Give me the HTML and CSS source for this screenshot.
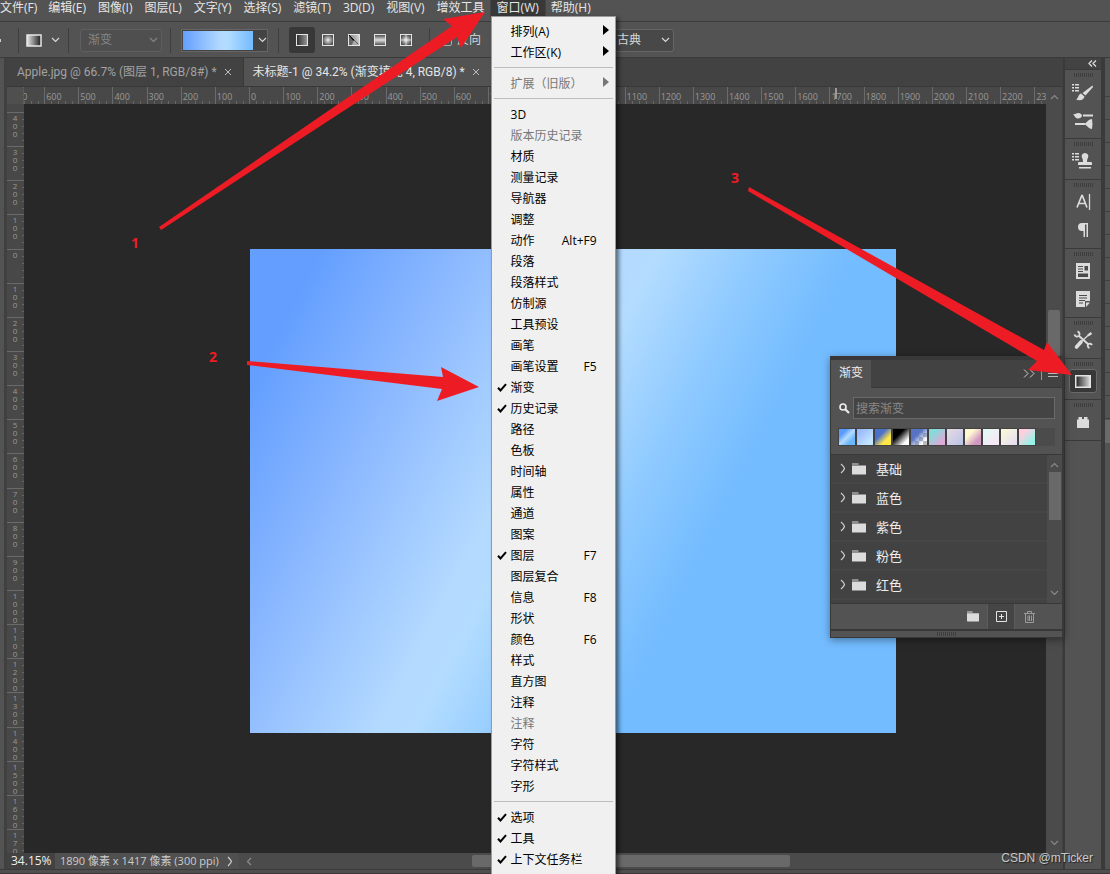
FILE: index.html
```html
<!DOCTYPE html>
<html lang="zh-CN">
<head>
<meta charset="utf-8">
<title>未标题-1</title>
<link rel="stylesheet" href="styles.css">
</head>
<body>
<svg class="defs" width="0" height="0" aria-hidden="true">
  <defs>
    <linearGradient id="g-dark"><stop offset="0" stop-color="#222"/><stop offset="1" stop-color="#ddd"/></linearGradient>
    <linearGradient id="g-fg"><stop offset="0" stop-color="#e8e8e8"/><stop offset="1" stop-color="#1c1c1c"/></linearGradient>
    <linearGradient id="g-lin"><stop offset="0" stop-color="#2c2c2c"/><stop offset="1" stop-color="#9a9a9a"/></linearGradient>
    <radialGradient id="g-rad"><stop offset="0" stop-color="#eee"/><stop offset="1" stop-color="#555"/></radialGradient>
    <linearGradient id="g-ang" x1="0" y1="0.3" x2="1" y2="0"><stop offset="0" stop-color="#777"/><stop offset="1" stop-color="#ddd"/></linearGradient>
    <linearGradient id="g-ref" x1="0" y1="0" x2="0" y2="1"><stop offset="0" stop-color="#444"/><stop offset=".5" stop-color="#ddd"/><stop offset="1" stop-color="#444"/></linearGradient>
    <symbol id="chev" viewBox="0 0 9 6"><path d="M1 1l3.500 3.500L8 1" fill="none" stroke="currentColor" stroke-width="1.200"/></symbol>
    <symbol id="check" viewBox="0 0 10 9"><path d="M1 4.800l2.500 2.700L9 1.200" fill="none" stroke="#000" stroke-width="2"/></symbol>
    <symbol id="folder" viewBox="0 0 14 12"><path d="M0 .500h6.500v1H0zM0 2.500h14V11q0 .500-.500.500h-13Q0 11.500 0 11z" fill="#dcdcdc"/></symbol>
    <symbol id="close" viewBox="0 0 8 8"><path d="M1 1l6 6M7 1L1 7" stroke="#bdbdbd" stroke-width="1"/></symbol>
  </defs>
</svg>

<div class="app">
  <nav class="menubar" aria-label="主菜单">
    <button>文件(F)</button><button>编辑(E)</button><button>图像(I)</button><button>图层(L)</button><button>文字(Y)</button><button>选择(S)</button><button>滤镜(T)</button><button>3D(D)</button><button>视图(V)</button><button>增效工具</button>
    <div class="menu-host">
      <button class="open">窗口(W)</button>
      <ul class="menu">
        <li><button><i></i><span>排列(A)</span><b class="sub"></b></button></li>
        <li><button><i></i><span>工作区(K)</span><b class="sub"></b></button></li>
        <li class="rule"></li>
        <li><button disabled><i></i><span>扩展（旧版）</span><b class="sub"></b></button></li>
        <li class="rule"></li>
        <li><button><i></i><span>3D</span></button></li>
        <li><button disabled><i></i><span>版本历史记录</span></button></li>
        <li><button><i></i><span>材质</span></button></li>
        <li><button><i></i><span>测量记录</span></button></li>
        <li><button><i></i><span>导航器</span></button></li>
        <li><button><i></i><span>调整</span></button></li>
        <li><button><i></i><span>动作</span><kbd>Alt+F9</kbd></button></li>
        <li><button><i></i><span>段落</span></button></li>
        <li><button><i></i><span>段落样式</span></button></li>
        <li><button><i></i><span>仿制源</span></button></li>
        <li><button><i></i><span>工具预设</span></button></li>
        <li><button><i></i><span>画笔</span></button></li>
        <li><button><i></i><span>画笔设置</span><kbd>F5</kbd></button></li>
        <li><button><svg><use href="#check"/></svg><span>渐变</span></button></li>
        <li><button><svg><use href="#check"/></svg><span>历史记录</span></button></li>
        <li><button><i></i><span>路径</span></button></li>
        <li><button><i></i><span>色板</span></button></li>
        <li><button><i></i><span>时间轴</span></button></li>
        <li><button><i></i><span>属性</span></button></li>
        <li><button><i></i><span>通道</span></button></li>
        <li><button><i></i><span>图案</span></button></li>
        <li><button><svg><use href="#check"/></svg><span>图层</span><kbd>F7</kbd></button></li>
        <li><button><i></i><span>图层复合</span></button></li>
        <li><button><i></i><span>信息</span><kbd>F8</kbd></button></li>
        <li><button><i></i><span>形状</span></button></li>
        <li><button><i></i><span>颜色</span><kbd>F6</kbd></button></li>
        <li><button><i></i><span>样式</span></button></li>
        <li><button><i></i><span>直方图</span></button></li>
        <li><button><i></i><span>注释</span></button></li>
        <li><button disabled><i></i><span>注释</span></button></li>
        <li><button><i></i><span>字符</span></button></li>
        <li><button><i></i><span>字符样式</span></button></li>
        <li><button><i></i><span>字形</span></button></li>
        <li class="rule"></li>
        <li><button><svg><use href="#check"/></svg><span>选项</span></button></li>
        <li><button><svg><use href="#check"/></svg><span>工具</span></button></li>
        <li><button><svg><use href="#check"/></svg><span>上下文任务栏</span></button></li>
      </ul>
    </div>
    <button>帮助(H)</button>
  </nav>

  <div class="options">
    <span class="nub"></span>
    <span class="divider first"></span>
    <button class="tool" aria-label="渐变工具">
      <svg width="16" height="13"><rect x="1" y="1" width="14" height="11" fill="url(#g-fg)" stroke="#e8e8e8" stroke-width="1.500"/></svg>
      <svg width="9" height="6"><use href="#chev"/></svg>
    </button>
    <span class="divider"></span>
    <span class="picker faded"><select aria-label="填充类型" disabled><option>渐变</option></select><svg width="9" height="6"><use href="#chev"/></svg></span>
    <span class="divider"></span>
    <button class="ramp" aria-label="编辑渐变"><span class="ramp-fill"></span><svg width="9" height="6"><use href="#chev"/></svg></button>
    <span class="divider"></span>
    <div class="styles">
      <button class="on" aria-label="线性渐变"><svg width="12" height="12"><rect x=".5" y=".5" width="11" height="11" fill="url(#g-lin)" stroke="#e4e4e4"/></svg></button>
      <button aria-label="径向渐变"><svg width="12" height="12"><rect x=".5" y=".5" width="11" height="11" fill="url(#g-rad)" stroke="#e4e4e4"/></svg></button>
      <button aria-label="角度渐变"><svg width="12" height="12"><rect x=".5" y=".5" width="11" height="11" fill="url(#g-ang)" stroke="#e4e4e4"/><path d="M1 1l5 5-2 5H1z" fill="#666"/><path d="M1 1l9 9L5 6z" fill="#111" stroke="#111"/><path d="M6 6l5 5H4z" fill="#aaa"/></svg></button>
      <button aria-label="对称渐变"><svg width="12" height="12"><rect x=".5" y=".5" width="11" height="11" fill="url(#g-ref)" stroke="#e4e4e4"/></svg></button>
      <button aria-label="菱形渐变"><svg width="12" height="12"><rect x=".5" y=".5" width="11" height="11" fill="url(#g-rad)" stroke="#e4e4e4"/><path d="M6 1v10M1 6h10" stroke="#eee" opacity=".7"/></svg></button>
    </div>
    <span class="divider"></span>
    <label class="reverse"><input type="checkbox"><span>反向</span></label>
    <span class="picker method"><select aria-label="方法"><option>古典</option></select><svg width="9" height="6"><use href="#chev"/></svg></span>
  </div>

  <div class="workspace">
    <aside class="toolstrip"></aside>
    <main class="document">
      <div class="tabs">
        <div class="tab"><span>Apple.jpg @ 66.7% (图层 1, RGB/8#) *</span><button aria-label="关闭"><svg width="8" height="8"><use href="#close"/></svg></button></div>
        <div class="tab active"><span>未标题-1 @ 34.2% (渐变填充 4, RGB/8) *</span><button aria-label="关闭"><svg width="8" height="8"><use href="#close"/></svg></button></div>
      </div>
      <div class="view">
        <div class="corner"></div>
        <div class="ruler-x"><div class="track" id="rx"></div><span class="marker"></span></div>
        <div class="ruler-y"><div class="track" id="ry"></div></div>
        <div class="canvas"><div class="artboard"></div></div>
        <div class="vscroll">
          <svg class="up" width="9" height="6"><use href="#chev"/></svg>
          <span class="vthumb"></span>
          <svg width="9" height="6"><use href="#chev"/></svg>
        </div>
      </div>
      <footer class="status">
        <span class="zoom">34.15%</span>
        <span class="info">1890 像素 x 1417 像素 (300 ppi)<svg width="6" height="11"><path d="M1 1q2.500 2.500 3.500 4.500Q3.500 7.500 1 10" fill="none" stroke="#ccc" stroke-width="1.200"/></svg></span>
        <div class="hscroll"><svg width="6" height="9"><path d="M5 1L1.500 4.500 5 8" fill="none" stroke="#8b8b8b" stroke-width="1.200"/></svg><span class="hthumb"></span></div>
      </footer>
    </main>

    <aside class="dock">
      <button class="collapse" aria-label="展开面板"><svg width="9" height="7"><path d="M4 .500L1 3.500l3 3M8 .500l-3 3 3 3" fill="none" stroke="#ddd" stroke-width="1.300"/></svg></button>
      <div class="group">
        <span class="grip"></span>
        <button aria-label="画笔设置"><svg width="22" height="22" viewBox="0 0 22 22" fill="#dcdcdc"><path d="M0 3h2v1.500H0zM3 3h4v1.500H3zM0 6h2v1.500H0zM3 6h4v1.500H3zM0 9h2v1.500H0zM3 9h4v1.500H3z"/><path d="M20.500 4.500l.500 1.500-7.500 8.500-3-2.500z"/><path d="M9 12.500l3.500 3c-.500 3.500-4.500 4.500-8.500 3 2.500-1 2-5 5-6z"/></svg></button>
        <button aria-label="画笔"><svg width="22" height="22" viewBox="0 0 22 22" fill="#dcdcdc"><path d="M11 5.500h10v2H11zM1 5c2 1 2.500-1 5.500-1 2 0 3.500 1.500 3.500 2.500S8.500 9.500 6 9.500 3 7.500 1 5zM3 14h10v2H3zM13 14.500c2-1.500 4-4.500 7-4.500q1 5 0 10c-3 0-5-3.500-7-4.500z"/></svg></button>
      </div>
      <div class="group">
        <span class="grip"></span>
        <button aria-label="仿制源"><svg width="22" height="22" viewBox="0 0 22 22" fill="#dcdcdc"><path d="M0 3h2v1.500H0zM3 3h4v1.500H3zM0 6h2v1.500H0zM3 6h4v1.500H3zM0 9h2v1.500H0zM3 9h4v1.500H3z"/><path d="M13 3a3.300 3.300 0 0 1 3 4.800c-.800 1.500-1 2.500-1 4.200h4q1 0 1 1v2H6v-2q0-1 1-1h4c0-1.700-.200-2.700-1-4.200A3.300 3.300 0 0 1 13 3zM7 17h12v1.500H7z"/></svg></button>
      </div>
      <div class="group">
        <span class="grip"></span>
        <button aria-label="字符"><svg width="22" height="22" viewBox="0 0 22 22" fill="none" stroke="#dcdcdc"><path d="M5 16.500L9.800 4.500h.500L15 16.500M6.500 12.500h7" stroke-width="1.700"/><path d="M17.500 3v16" stroke-width="1.300"/></svg></button>
        <button aria-label="段落"><svg width="22" height="22" viewBox="0 0 22 22" fill="#dcdcdc"><path d="M10 4h6v14h-1.500V5.500H13V18h-1.500v-6H10a4 4 0 0 1 0-8z"/></svg></button>
      </div>
      <div class="group">
        <span class="grip"></span>
        <button aria-label="属性"><svg width="22" height="22" viewBox="0 0 22 22"><path d="M4 3h14v16H4z" fill="#dcdcdc"/><path d="M6 6.500h5M6 9h5M6 11.500h5" stroke="#4b4b4b" stroke-width="1"/><path d="M12.500 6H16v4.500h-3.500zM6 13.500h10V17H6z" fill="#4b4b4b"/></svg></button>
        <button aria-label="注释"><svg width="22" height="22" viewBox="0 0 22 22"><path d="M4 3h14v10h-5v6H4z" fill="#dcdcdc"/><path d="M14 14.500h4L14 19z" fill="#dcdcdc"/><path d="M7 7.500h8M7 10h8M7 12.500h6M7 15h4" stroke="#4b4b4b" stroke-width="1"/></svg></button>
      </div>
      <div class="group">
        <span class="grip"></span>
        <button aria-label="工具预设"><svg width="22" height="22" viewBox="0 0 22 22" fill="none" stroke="#dcdcdc"><path d="M6.500 6.500l10 9" stroke-width="2"/><path d="M2.500 5.500a2.500 2.500 0 0 0 4 1.500M5.500 2.500A2.500 2.500 0 0 1 7 6.500M16 15.500a2.500 2.500 0 0 1 4 .500M16 15.500a2.500 2.500 0 0 0 1.500 3.500" stroke-width="1.800"/><path d="M4.500 18l4.500-5" stroke-width="3.600" stroke-linecap="round"/><path d="M9 13l7.500-7" stroke-width="1.300"/><path d="M16 6.500L19.500 4" stroke-width="2.200"/></svg></button>
      </div>
      <div class="group">
        <span class="grip"></span>
        <button class="pressed" aria-label="渐变"><svg width="16" height="13"><rect x=".75" y=".75" width="14.500" height="11.500" fill="url(#g-dark)" stroke="#e4e4e4" stroke-width="1.500"/></svg></button>
      </div>
      <div class="group">
        <span class="grip"></span>
        <button aria-label="增效工具"><svg width="12" height="11"><path d="M1.500 0h3.500v2h2V0h3.500v2.500H12V11H0V2.500h1.500z" fill="#dcdcdc"/></svg></button>
      </div>
    </aside>
    <aside class="edge"><div class="edge-rows"></div><div class="edge-hot"></div></aside>
  </div>
  <div class="bottom"></div>
</div>

<section class="panel" aria-label="渐变">
  <header class="panel-head">
    <h2>渐变</h2>
    <div class="panel-tools">
      <svg width="12" height="9"><path d="M1 .500l4 4-4 4M7 .500l4 4-4 4" fill="none" stroke="#ccc"/></svg>
      <span class="bar"></span>
      <svg width="10" height="9"><path d="M0 1.500h10M0 4.500h10M0 7.500h10" stroke="#bbb"/></svg>
    </div>
  </header>
  <div class="search">
    <label for="q"><svg width="11" height="11"><circle cx="4" cy="4" r="3" fill="none" stroke="#eee" stroke-width="1.600"/><path d="M6 6l4 4" stroke="#eee" stroke-width="2.200"/></svg></label>
    <input id="q" type="text" placeholder="搜索渐变" aria-label="搜索渐变">
  </div>
  <div class="swatches"><span class="s1"></span><span class="s2"></span><span class="s3"></span><span class="s4"></span><span class="s5"></span><span class="s6"></span><span class="s7"></span><span class="s8"></span><span class="s9"></span><span class="s10"></span><span class="s11"></span></div>
  <div class="list">
    <ul>
      <li><svg class="tw" width="6" height="11"><path d="M1 1q3 2.500 3.500 4.500Q4 7.500 1 10" fill="none" stroke="#ccc" stroke-width="1.200"/></svg><svg width="14" height="12"><use href="#folder"/></svg><span>基础</span></li>
      <li><svg class="tw" width="6" height="11"><path d="M1 1q3 2.500 3.500 4.500Q4 7.500 1 10" fill="none" stroke="#ccc" stroke-width="1.200"/></svg><svg width="14" height="12"><use href="#folder"/></svg><span>蓝色</span></li>
      <li><svg class="tw" width="6" height="11"><path d="M1 1q3 2.500 3.500 4.500Q4 7.500 1 10" fill="none" stroke="#ccc" stroke-width="1.200"/></svg><svg width="14" height="12"><use href="#folder"/></svg><span>紫色</span></li>
      <li><svg class="tw" width="6" height="11"><path d="M1 1q3 2.500 3.500 4.500Q4 7.500 1 10" fill="none" stroke="#ccc" stroke-width="1.200"/></svg><svg width="14" height="12"><use href="#folder"/></svg><span>粉色</span></li>
      <li><svg class="tw" width="6" height="11"><path d="M1 1q3 2.500 3.500 4.500Q4 7.500 1 10" fill="none" stroke="#ccc" stroke-width="1.200"/></svg><svg width="14" height="12"><use href="#folder"/></svg><span>红色</span></li>
    </ul>
    <div class="list-scroll"><svg class="up" width="9" height="6"><use href="#chev"/></svg><span></span><svg width="9" height="6"><use href="#chev"/></svg></div>
  </div>
  <footer class="panel-foot">
    <button aria-label="新建组"><svg width="12" height="11" viewBox="0 0 14 12" preserveAspectRatio="none"><use href="#folder"/></svg></button>
    <button class="new" aria-label="新建渐变"><svg width="11" height="11"><path d="M.5.5h10v10H.5zM5.500 3v5M3 5.500h5" fill="none" stroke="#e4e4e4"/></svg></button>
    <button aria-label="删除"><svg width="11" height="12"><path d="M0 2.500h11M3.500 2V.500h4V2M1.500 3v8.500h8V3M4 4.500v5.500M5.500 4.500v5.500M7.500 4.500v5.500" fill="none" stroke="#9a9a9a"/></svg></button>
  </footer>
  <div class="panel-grip"><span class="grip"></span></div>
</section>

<svg class="arrows" width="1110" height="874" fill="#ed1c24" aria-hidden="true">
  <path d="M159 227L452 26 443 19 485 12 461 48 457 37 161 230z"/>
  <path d="M247 361L443 377 441 367 479 387 437 401 442 389 247 365z"/>
  <path d="M749 187L1044 350 1047 342 1072 375 1028 370 1037 361 748 191z"/>
</svg>
<span class="step one">1</span>
<span class="step two">2</span>
<span class="step three">3</span>
<span class="watermark">CSDN @mTicker</span>
<script src="rulers.js"></script>
</body>
</html>
```

FILE: styles.css
```css
* { box-sizing: border-box; }
body {
  margin: 0;
  height: 100vh;
  overflow: hidden;
  position: relative;
  background: #535353;
  color: #e6e6e6;
  font: 12px/16px "Open Sans", "Noto Sans CJK SC", sans-serif;
}
button { font: inherit; color: inherit; background: none; border: 0; padding: 0; margin: 0; }
ul { list-style: none; margin: 0; padding: 0; }
svg { display: block; flex: none; }
.defs { position: absolute; }
.app { height: 100%; display: flex; flex-direction: column; }

/* menu bar */
.menubar { display: flex; height: 22px; padding-bottom: 5px; border-bottom: 1px solid #3c3c3c; flex: none; }
.menubar > button, .menu-host > button { padding: 0 6px; height: 16px; white-space: nowrap; }
.menubar > button:first-child { padding: 0 5px 0 0; }
.menu-host { position: relative; }
.menu-host > .open { background: #383838; box-shadow: 0 0 0 1px #444; }
.menu {
  position: absolute;
  z-index: 5;
  top: 16px;
  left: 0;
  width: 125px;
  height: calc(100vh - 16px);
  overflow: hidden;
  padding-top: 4px;
  background: #f0f0f0;
  border: 1px solid #9a9a9a;
  border-bottom: 0;
  box-shadow: 3px 2px 4px rgba(0, 0, 0, .5);
  color: #000;
}
.menu button { display: flex; align-items: center; width: 100%; height: 21px; padding: 0 18px 0 5px; text-align: left; white-space: nowrap; }
.menu button:disabled { color: #777; }
.menu i, .menu svg { width: 10px; height: 9px; margin-right: 4px; flex: none; }
.menu span { flex: 1; }
.menu kbd { font: inherit; }
.menu .sub { border: 5px solid transparent; border-left: 6px solid currentColor; border-right: 0; margin-right: -12px; margin-bottom: 4px; }
.menu .rule { height: 1px; margin: 4px 2px 5px; background: #bdbdbd; }

/* options bar */
.options { display: flex; align-items: center; height: 36px; flex: none; border-bottom: 1px solid #3a3a3a; color: #d8d8d8; padding-top: 1px; }
.nub { width: 18px; height: 3px; border-left: 1px solid #ccc; }
.divider { width: 1px; height: 25px; background: #3e3e3e; flex: none; margin: 0 10px 0 8px; }
.divider.first { margin: 0 7px 0 0; }
.tool { display: flex; align-items: center; gap: 9px; }
.picker { display: grid; align-items: center; height: 23px; border: 1px solid #666; border-radius: 3px; background: #484848; }
.picker select, .picker svg { grid-area: 1 / 1; }
.picker select { appearance: none; width: 100%; height: 100%; border: 0; background: none; font: inherit; color: inherit; padding: 0 7px; opacity: 1; }
.picker svg { justify-self: end; margin-right: 3px; pointer-events: none; }
.faded { width: 82px; background: #4f4f4f; border-color: #5f5f5f; color: #858585; margin-left: 1px; }
.ramp { display: flex; align-items: center; gap: 3px; width: 87px; height: 23px; border: 1px solid #666; background: #444; }
.ramp-fill { width: 71px; height: 19px; margin-left: 1px; background: linear-gradient(90deg, #649fff, #b4dbff 55%, #b0dbff 65%, #73bcff); }
.ramp svg { margin-left: 2px; }
.ramp + .divider { margin-left: 10px; }
.styles { display: flex; }
.styles button { display: grid; place-items: center; width: 26px; height: 26px; border-radius: 3px; }
.styles .on { background: #383838; }
.reverse { display: flex; align-items: center; gap: 5px; margin-right: 128px; }
.styles + .divider { margin: 0 10px; }
.reverse input { margin: 0; width: 12px; height: 12px; appearance: none; border: 1px solid #aaa; border-radius: 2px; }
.method { width: 65px; }

/* workspace */
.workspace { flex: 1; min-height: 0; display: flex; }
.toolstrip { width: 7px; border-right: 3px solid #404040; background: #535353; }
.document { flex: 1; min-width: 0; display: flex; flex-direction: column; background: #424242; }
.tabs { display: flex; height: 29px; border-bottom: 1px solid #383838; flex: none; font-family: Roboto, "Noto Sans CJK SC", sans-serif; }
.tab { display: flex; align-items: center; gap: 7px; padding: 0 11px 0 10px; color: #a3a3a3; border-right: 1px solid #383838; white-space: nowrap; }
.tab.active { background: #535353; color: #e6e6e6; padding-left: 9px; }
.view { flex: 1; min-height: 0; display: grid; grid-template: 17px minmax(0, 1fr) / 17px minmax(0, 1fr) 17px; --scale: 100px; --zoom: .3415; }
.corner { background: #4f4f4f; border-right: 1px dotted #666; }
.ruler-x, .ruler-y { overflow: hidden; background: #484848; color: #999; position: relative; }
.track { display: flex; }
.ruler-x .track { height: 100%; margin-left: -14px; }
.ruler-y .track { flex-direction: column; margin-top: 8px; }
.cell { flex: 0 0 calc(var(--scale) * var(--zoom)); overflow: hidden; }
.ruler-x .cell { border-left: 1px solid #6a6a6a; padding: 2px 0 0 1px; font-size: 9px; line-height: 15px; background: repeating-linear-gradient(90deg, transparent 0 6px, #666 6px 7px) 0 100% / 100% 3px no-repeat; }
.ruler-y .cell { border-top: 1px solid #6a6a6a; padding: 1px 5px 0 4px; font-size: 8px; line-height: 8px; text-align: center; background: repeating-linear-gradient(180deg, transparent 0 6px, #666 6px 7px) 100% 0 / 2px 100% no-repeat; }
.ruler-y .cell span { display: block; }
.marker { position: absolute; left: 811px; top: 1px; width: 2px; height: 11px; background: #999; }
.canvas { background: #282828; position: relative; overflow: hidden; }
.artboard {
  position: absolute;
  left: 226px;
  top: 145px;
  width: calc(1892px * var(--zoom));
  height: calc(1417px * var(--zoom));
  background: linear-gradient(117deg, #649fff 8%, #8cb9ff 24%, #b4daff 42%, #b3dcff 46%, #8fcaff 57%, #73bcff 68%);
}
.vscroll { grid-area: 1 / 3 / 3 / 4; background: #4b4b4b; border-right: 1px solid #424242; display: flex; flex-direction: column; align-items: center; padding: 7px 0; color: #888; }
.vthumb { width: 12px; height: 130px; margin: 210px 0 auto; background: #696969; border-radius: 2px; }
.up { transform: scaleY(-1); }
.status { display: flex; height: 16px; flex: none; color: #eee; }
.zoom { width: 48px; padding-left: 4px; background: #424242; }
.info { display: flex; align-items: center; justify-content: space-between; width: 184px; padding: 0 6px 0 5px; background: #505050; color: #ccc; white-space: nowrap; font-size: 11px; }
.hscroll { flex: 1; display: flex; align-items: center; background: #4b4b4b; padding-left: 7px; }
.hthumb { width: 318px; height: 12px; margin-left: 220px; background: #696969; border-radius: 2px; }

/* dock */
.dock { width: 41px; background: #535353; border: 0 solid #3a3a3a; border-width: 0 3px 0 2px; }
.collapse { display: flex; width: 100%; height: 12px; background: #434343; align-items: center; padding-left: 23px; border-bottom: 1px solid #3a3a3a; }
.group { display: flex; flex-direction: column; align-items: center; padding-bottom: 4px; border-bottom: 1px solid #3a3a3a; }
.grip { width: 19px; height: 4px; margin: 3px 0 1px; background: repeating-linear-gradient(90deg, #3e3e3e 0 1px, transparent 1px 2px); }
.group button { display: grid; place-items: center; width: 28px; height: 28px; }
.group .pressed { height: 24px; margin: 2px 0; background: #383838; border: 1px solid #6a6a6a; border-radius: 3px; }
.edge { width: 6px; background: #535353; border-left: 1px solid #3a3a3a; }
.edge-rows { margin-top: 12px; height: 350px; background: repeating-linear-gradient(180deg, transparent 0 22px, #404040 22px 23px); background-position: 0 4px; }
.edge-hot { height: 23px; background: #6a6a6a; }
.bottom { height: 5px; background: #4f4f4f; border-top: 1px solid #3a3a3a; border-bottom: 1px solid #383838; flex: none; }

/* gradients panel */
.panel { position: absolute; right: 46px; top: 356px; width: 234px; background: #535353; border: 1px solid #383838; border-top-width: 4px; border-right-width: 2px; box-shadow: 0 2px 8px rgba(0, 0, 0, .4); }
.panel-head { display: flex; justify-content: space-between; height: 28px; background: #424242; }
.panel h2 { margin: 0; padding: 4px 8px; font-size: 12px; line-height: 17px; font-weight: 400; background: #535353; color: #eee; }
.panel-tools { display: flex; align-items: center; gap: 6px; padding-right: 4px; border-bottom: 1px solid #383838; flex: 1; justify-content: flex-end; }
.bar { width: 1px; height: 12px; background: #999; }
.search { display: flex; align-items: center; padding: 9px 7px 0 8px; gap: 3px; }
.search input { flex: 1; min-width: 0; height: 22px; border: 1px solid #6a6a6a; background: #444; padding: 0 2px; color: #eee; font: inherit; }
.search input::placeholder { color: #888; opacity: 1; }
.swatches { display: flex; gap: 2px; margin: 9px 7px 8px; padding: 1px; height: 18px; background: #4b4b4b; }
.swatches span { width: 16px; height: 16px; outline: 1px solid #424242; }
.s1 { background: linear-gradient(135deg, #5a9bff 25%, #b4dbff 50%, #6cb8ff 75%); }
.s2 { background: linear-gradient(135deg, #9dbcff 20%, #c2e6ff 80%); }
.s3 { background: linear-gradient(135deg, #4d70c8 35%, #ffe748 70%); }
.s4 { background: linear-gradient(135deg, #000 35%, #fff 80%); }
.s5 { background: linear-gradient(135deg, #5873c4 35%, rgba(88, 115, 196, 0) 80%), repeating-conic-gradient(#fff 0 25%, #bbb 0 50%) 0 0 / 8px 8px; }
.s6 { background: linear-gradient(135deg, #86dbd8 25%, #dcaad9 80%); }
.s7 { background: linear-gradient(135deg, #e9dbe6, #b9c2e6); }
.s8 { background: linear-gradient(135deg, #fff9d2 30%, #d198c0 75%); }
.s9 { background: linear-gradient(135deg, #e0fbf3, #fbe4f8); }
.s10 { background: linear-gradient(135deg, #fbfbd7, #e5dcf5); }
.s11 { background: linear-gradient(135deg, #ffcfe0 25%, #97f3e7 80%); }
.list { display: flex; height: 149px; overflow: hidden; border-top: 1px solid #383838; color: #eee; }
.list ul { flex: 1; background: #424242; }
.list li { display: flex; align-items: center; height: 29px; padding-left: 9px; font-size: 13px; border-bottom: 2px solid #464646; }
.list li span { margin-left: 10px; }
.tw { margin-right: 6px; }
.list-scroll { width: 15px; background: #4b4b4b; display: flex; flex-direction: column; align-items: center; padding: 7px 0; color: #888; justify-content: space-between; }
.list-scroll span { width: 12px; height: 48px; background: #696969; margin: 4px 0 auto; }
.panel-foot { display: flex; justify-content: flex-end; height: 26px; border-top: 1px solid #383838; padding-right: 19px; }
.panel-foot button { width: 28px; display: grid; place-items: center; }
.panel-foot .new { background: #454545; border: 1px solid #5c5c5c; border-width: 0 1px; }
.panel-grip { display: flex; justify-content: center; height: 8px; border-top: 2px solid #383838; }
.panel-grip .grip { margin: 1px 0; }

/* annotations */
.arrows { position: absolute; z-index: 8; left: 0; top: 0; pointer-events: none; }
.step { position: absolute; z-index: 8; color: #ed1c24; font-weight: 700; font-size: 14px; }
.one { left: 131px; top: 235px; }
.two { left: 209px; top: 349px; }
.three { left: 731px; top: 170px; }
.watermark { position: absolute; z-index: 9; right: 17px; bottom: 8px; font-family: "Liberation Sans", Arial, sans-serif; color: #c9c9c9; text-shadow: 1px 1px 1px #222; }
```

FILE: rulers.js
```js
function fill(id, from, to, stacked) {
  const track = document.getElementById(id);
  for (let v = from; v <= to; v += 100) {
    const cell = document.createElement('div');
    cell.className = 'cell';
    const label = String(Math.abs(v));
    if (stacked) {
      for (const digit of label) {
        const s = document.createElement('span');
        s.textContent = digit;
        cell.append(s);
      }
    } else {
      cell.textContent = label;
    }
    track.append(cell);
  }
}
fill('rx', -700, 2300, false);
fill('ry', -400, 1700, true);
```
